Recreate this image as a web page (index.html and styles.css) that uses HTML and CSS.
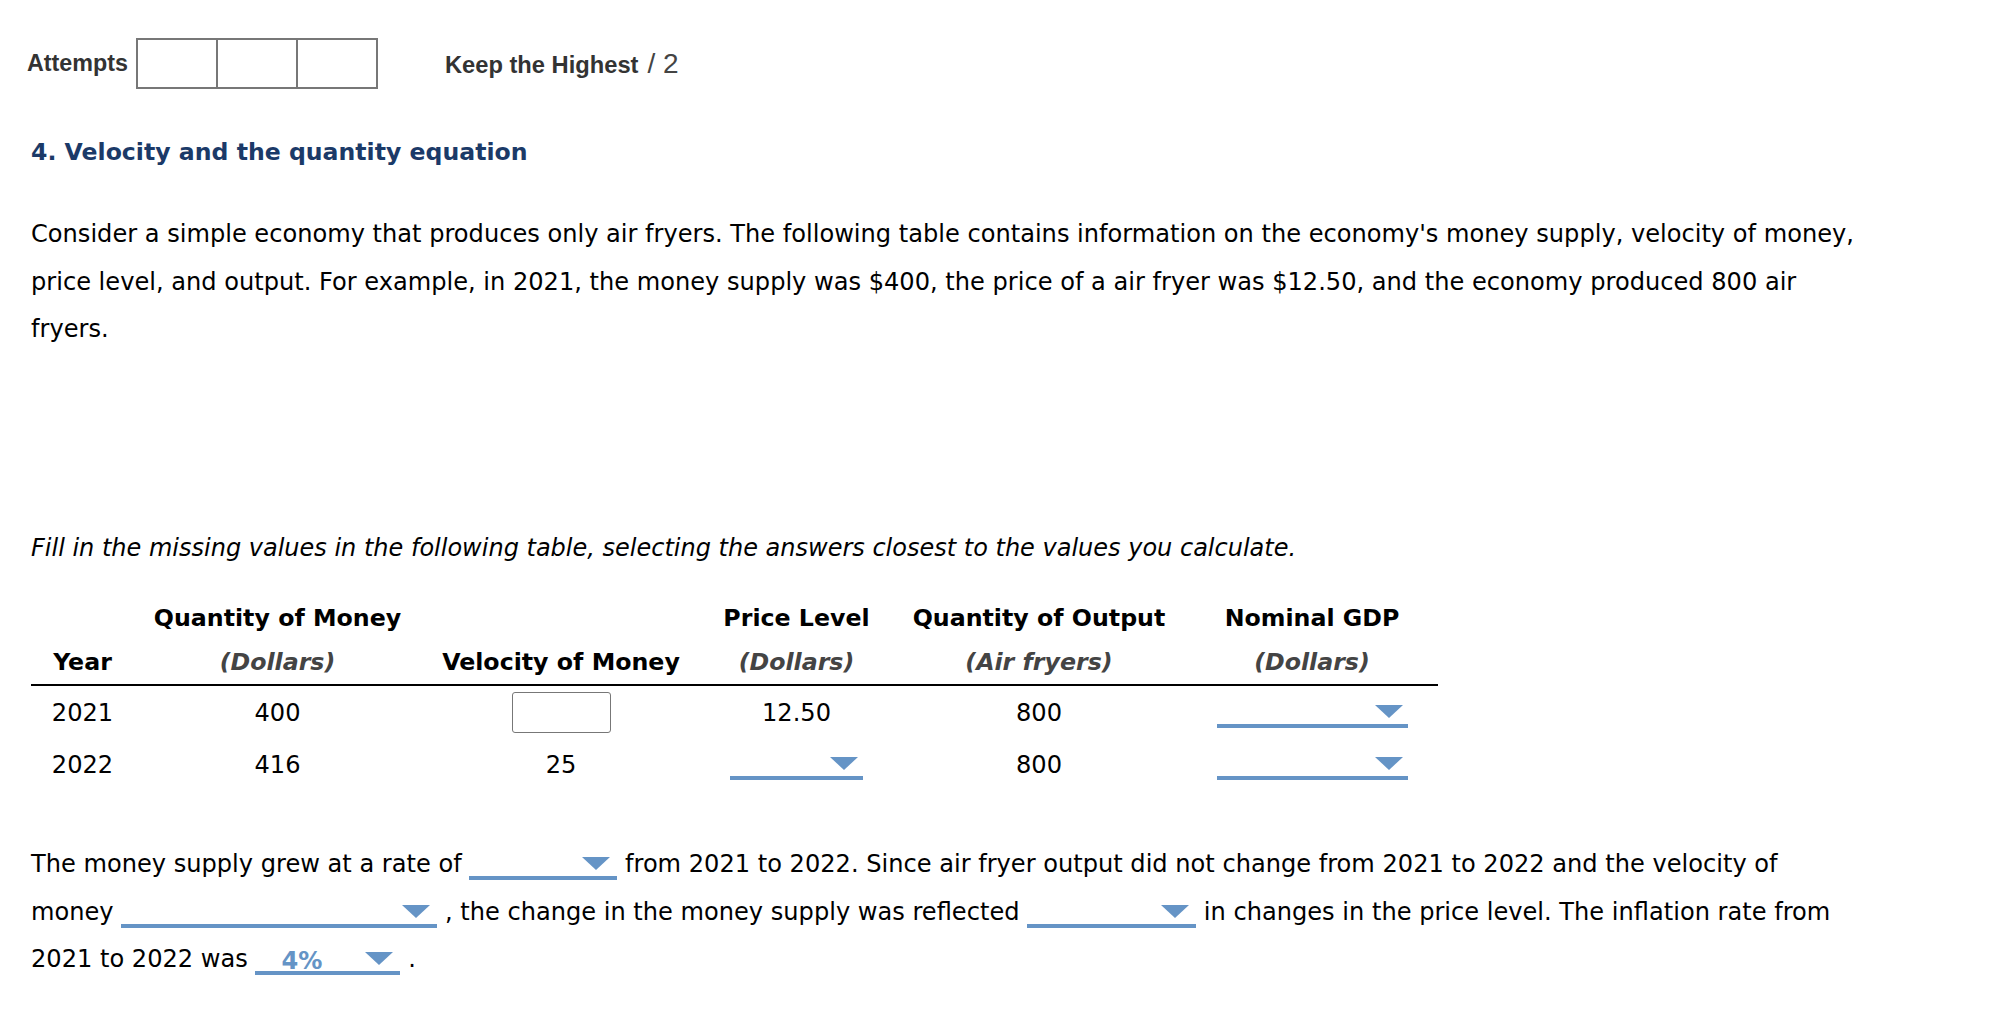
FILE: index.html
```html
<!DOCTYPE html>
<html>
<head>
<meta charset="utf-8">
<title>Velocity and the quantity equation</title>
<link rel="stylesheet" href="styles.css">
</head>
<body>
<div class="page">
  <div class="attempts">
    <span class="att-label">Attempts</span>
    <span class="boxes"><span class="box"></span><span class="box"></span><span class="box"></span></span>
    <span class="keep"><b>Keep the Highest</b><span class="slash">/ 2</span></span>
  </div>

  <h2 class="title">4. Velocity and the quantity equation</h2>

  <p class="para">Consider a simple economy that produces only air fryers. The following table contains information on the economy's money supply, velocity of money, price level, and output. For example, in 2021, the money supply was $400, the price of a air fryer was $12.50, and the economy produced 800 air fryers.</p>

  <p class="para instr">Fill in the missing values in the following table, selecting the answers closest to the values you calculate.</p>

  <table class="data">
    <colgroup>
      <col class="c1"><col class="c2"><col class="c3"><col class="c4"><col class="c5"><col class="c6">
    </colgroup>
    <thead>
      <tr class="h1">
        <th></th>
        <th>Quantity of Money</th>
        <th></th>
        <th>Price Level</th>
        <th>Quantity of Output</th>
        <th>Nominal GDP</th>
      </tr>
      <tr class="h2">
        <th>Year</th>
        <th class="unit">(Dollars)</th>
        <th>Velocity of Money</th>
        <th class="unit">(Dollars)</th>
        <th class="unit">(Air fryers)</th>
        <th class="unit">(Dollars)</th>
      </tr>
    </thead>
    <tbody>
      <tr class="r1">
        <td>2021</td>
        <td>400</td>
        <td><span class="inbox"></span></td>
        <td>12.50</td>
        <td>800</td>
        <td><span class="dd dd-gdp"></span></td>
      </tr>
      <tr class="r2">
        <td>2022</td>
        <td>416</td>
        <td>25</td>
        <td><span class="dd dd-price"></span></td>
        <td>800</td>
        <td><span class="dd dd-gdp"></span></td>
      </tr>
    </tbody>
  </table>

  <p class="para bottom">The money supply grew at a rate of <span class="dd dd-rate"></span> from 2021 to 2022. Since air fryer output did not change from 2021 to 2022 and the velocity of money <span class="dd dd-money"></span> , the change in the money supply was reflected <span class="dd dd-refl"></span> in changes in the price level. The inflation rate from 2021 to 2022 was <span class="dd dd-infl"><span class="val">4%</span></span> .</p>
</div>
</body>
</html>
```

FILE: styles.css
```css
html, body {
  margin: 0;
  padding: 0;
  background: #ffffff;
}

body {
  font-family: "DejaVu Sans", Verdana, sans-serif;
  color: #000;
}

.page {
  padding: 38px 0 0 31px;
}

.attempts {
  display: flex;
  align-items: center;
  height: 51px;
  margin-left: -4px;
  font-family: "Liberation Sans", Arial, sans-serif;
  color: #333;
}

.att-label {
  font-weight: bold;
  font-size: 23.3px;
  margin-right: 8px;
}

.boxes {
  display: flex;
  height: 51px;
}

.box {
  width: 78px;
  height: 47px;
  border: 2px solid #777;
  margin-right: -2px;
}

.keep {
  margin-left: 69px;
  font-size: 23.7px;
}

.slash {
  font-weight: normal;
  font-size: 28px;
  color: #444;
  margin-left: 9px;
}

.title {
  margin: 48px 0 0 0;
  font-size: 23.6px;
  line-height: 30px;
  font-weight: bold;
  color: #1b3a68;
}

.para {
  width: 1835px;
  margin: 44px 0 0 0;
  font-size: 24.1px;
  line-height: 47.5px;
}

.instr {
  font-style: italic;
  font-size: 24px;
  margin-top: 171px;
}

.data {
  border-collapse: collapse;
  table-layout: fixed;
  width: 1407px;
  margin-top: 24px;
  font-size: 24.1px;
}

.c1 { width: 103px; }
.c2 { width: 287px; }
.c3 { width: 280px; }
.c4 { width: 191px; }
.c5 { width: 294px; }
.c6 { width: 252px; }

.data th, .data td {
  padding: 0;
  text-align: center;
  vertical-align: middle;
}

.data th {
  font-weight: bold;
  font-size: 23.7px;
}

.h1 th { height: 43px; }
.h2 th { height: 45px; border-bottom: 2px solid #000; }

.unit {
  font-style: italic;
  color: #444;
}

.r1 td { height: 53px; }
.r2 td { height: 52px; }

.inbox {
  display: inline-block;
  width: 97px;
  height: 39px;
  border: 1.5px solid #777;
  border-radius: 3px;
  vertical-align: middle;
}

.dd {
  display: inline-block;
  overflow: hidden;
  box-sizing: border-box;
  height: 30px;
  line-height: 30px;
  border-bottom: 4px solid #6594c6;
  vertical-align: -8px;
  position: relative;
}

.dd::after {
  content: "";
  position: absolute;
  right: 7px;
  top: 7px;
  width: 0;
  height: 0;
  border-left: 14px solid transparent;
  border-right: 14px solid transparent;
  border-top: 13px solid #6594c6;
}

.data .dd { vertical-align: middle; }
.data .dd::after { right: 5px; }

.dd-gdp { width: 191px; }
.dd-price { width: 133px; }
.dd-rate { width: 148px; }
.dd-money { width: 316px; }
.dd-refl { width: 169px; }
.dd-infl { width: 145px; }

.bottom { margin-top: 50px; }

.val {
  display: inline-block;
  color: #6594c6;
  font-weight: bold;
  padding: 1px 0 0 26px;
}
```
